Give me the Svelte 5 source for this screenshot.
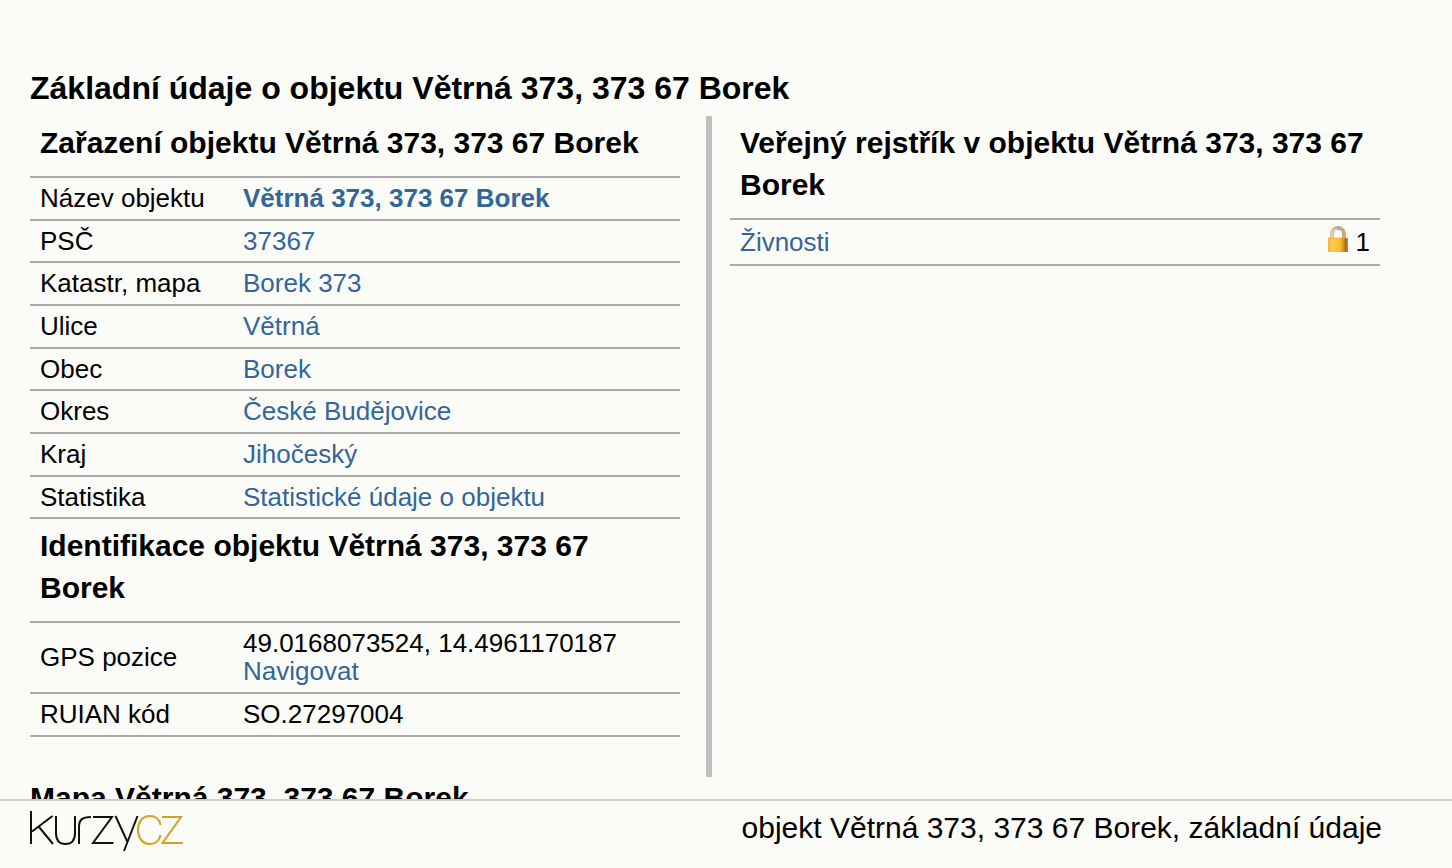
<script>
  const facts = [
    { label: 'Název objektu', value: 'Větrná 373, 373 67 Borek', strong: true },
    { label: 'PSČ', value: '37367' },
    { label: 'Katastr, mapa', value: 'Borek 373' },
    { label: 'Ulice', value: 'Větrná' },
    { label: 'Obec', value: 'Borek' },
    { label: 'Okres', value: 'České Budějovice' },
    { label: 'Kraj', value: 'Jihočeský' },
    { label: 'Statistika', value: 'Statistické údaje o objektu' }
  ];
</script>

<main>
  <h1>Základní údaje o objektu Větrná 373, 373 67 Borek</h1>

  <div class="columns">
    <section class="left">
      <h2>Zařazení objektu Větrná 373, 373 67 Borek</h2>
      <table class="facts">
        <tbody>
          {#each facts as fact}
            <tr>
              <th scope="row">{fact.label}</th>
              <td><a href="#detail" class:strong={fact.strong}>{fact.value}</a></td>
            </tr>
          {/each}
        </tbody>
      </table>

      <h2>Identifikace objektu Větrná 373, 373 67 Borek</h2>
      <table>
        <tbody>
          <tr class="gps">
            <th scope="row">GPS pozice</th>
            <td>49.0168073524, 14.4961170187<br /><a href="#navigovat">Navigovat</a></td>
          </tr>
          <tr>
            <th scope="row">RUIAN kód</th>
            <td>SO.27297004</td>
          </tr>
        </tbody>
      </table>
    </section>

    <section class="right">
      <h2>Veřejný rejstřík v objektu Větrná 373, 373 67 Borek</h2>
      <table class="register">
        <tbody>
          <tr>
            <th scope="row"><a href="#zivnosti">Živnosti</a></th>
            <td>
              <span class="count">
                <svg width="22" height="32" viewBox="0 0 22 32" aria-hidden="true">
                  <defs>
                    <linearGradient id="brass">
                      <stop offset="0" stop-color="#f0ae48" />
                      <stop offset="0.2" stop-color="#ffcb4c" />
                      <stop offset="0.6" stop-color="#fbbc30" />
                      <stop offset="0.75" stop-color="#dc9a2c" />
                      <stop offset="0.88" stop-color="#a8681c" />
                      <stop offset="1" stop-color="#c88a3c" />
                    </linearGradient>
                    <linearGradient id="shackle">
                      <stop offset="0" stop-color="#d9bd8e" />
                      <stop offset="0.5" stop-color="#b5a8a8" />
                      <stop offset="1" stop-color="#c9ab7c" />
                    </linearGradient>
                  </defs>
                  <path d="M6 13V8a6 6 0 0 1 12 0v5" fill="none" stroke="url(#shackle)" stroke-width="4" />
                  <path d="M6 12V8a6 6 0 0 1 5-5" fill="none" stroke="#efe6dc" stroke-width="1" />
                  <path d="M2 12h20v14H2z" fill="url(#brass)" />
                  <path d="M2 12h20" stroke="#e8a33c" stroke-width="1" opacity=".6" />
                </svg>
                1
              </span>
            </td>
          </tr>
        </tbody>
      </table>
    </section>
  </div>

  <h2 class="map">Mapa Větrná 373, 373 67 Borek</h2>
</main>

<footer>
  <a class="logo" href="#kurzy" aria-label="kurzycz">
    <svg width="156" height="42" viewBox="0 0 156 42" fill="none" stroke-width="2" aria-hidden="true">
      <g stroke="#111">
        <path d="M2 1v33M23.500 6L3 21.500M10 17l14 17" />
        <path d="M27 6v17c0 7 3 11 9.500 11s9.500-4 9.500-11V6" />
        <path d="M50 34V17c0-7 3-10 12-10" />
        <path d="M64 7h19L64 33h20.500" />
        <path d="M86.500 6l12 26M108.500 6L95 41" />
      </g>
      <g stroke="#d6a01e">
        <path d="M131.500 15c-1-6-5.500-9-10.500-9-7.500 0-12 6-12 14s4.500 14 12 14c5 0 9.500-3 10.500-9" />
        <path d="M133 7h19L133.500 33H154" />
      </g>
    </svg>
  </a>
  <span>objekt Větrná 373, 373 67 Borek, základní údaje</span>
</footer>

<style>
  :global(body) {
    margin: 0;
    background: #fbfbf7;
    color: #000;
    font-family: 'Liberation Sans', Arial, sans-serif;
    font-size: 26px;
  }
  main {
    padding: 66px 72px 0 30px;
  }
  h1,
  h2 {
    margin: 0;
    font-weight: 700;
  }
  h1 {
    padding-bottom: 6px;
    font-size: 32px;
    line-height: 44px;
  }
  h2 {
    padding: 6px 10px 12px;
    font-size: 30px;
    line-height: 42px;
  }
  .map {
    padding: 0;
  }
  .columns {
    display: grid;
    grid-template-columns: 1fr 1fr;
  }
  .left {
    padding: 0 26px 40px 0;
    margin-right: -7px;
    border-right: 6px solid #c0c0c0;
  }
  .right {
    padding-left: 25px;
  }
  table {
    width: 100%;
    border-spacing: 0;
    border-top: 2px solid #aaa;
  }
  th,
  td {
    box-sizing: border-box;
    height: 43px;
    padding: 0 10px 1px;
    border-bottom: 2px solid #aaa;
    font-weight: 400;
    line-height: 28px;
    text-align: left;
    vertical-align: middle;
  }
  th {
    width: 203px;
  }
  .facts tr:nth-child(3n + 2) > * {
    height: 42px;
  }
  .gps > * {
    height: 71px;
  }
  .register > tbody > tr > * {
    height: 46px;
    padding-bottom: 0;
  }
  .count {
    display: flex;
    justify-content: flex-end;
    align-items: center;
    gap: 8px;
  }
  a {
    color: #369;
    text-decoration: none;
  }
  .strong {
    font-weight: 700;
  }
  footer {
    position: fixed;
    right: 0;
    bottom: 0;
    left: 0;
    display: flex;
    justify-content: space-between;
    box-sizing: border-box;
    height: 69px;
    padding: 9px 70px 0 29px;
    border-top: 2px solid #ccc;
    background: #fbfbf7;
    font-size: 30px;
    line-height: 36px;
  }
  .logo svg {
    display: block;
  }
</style>
